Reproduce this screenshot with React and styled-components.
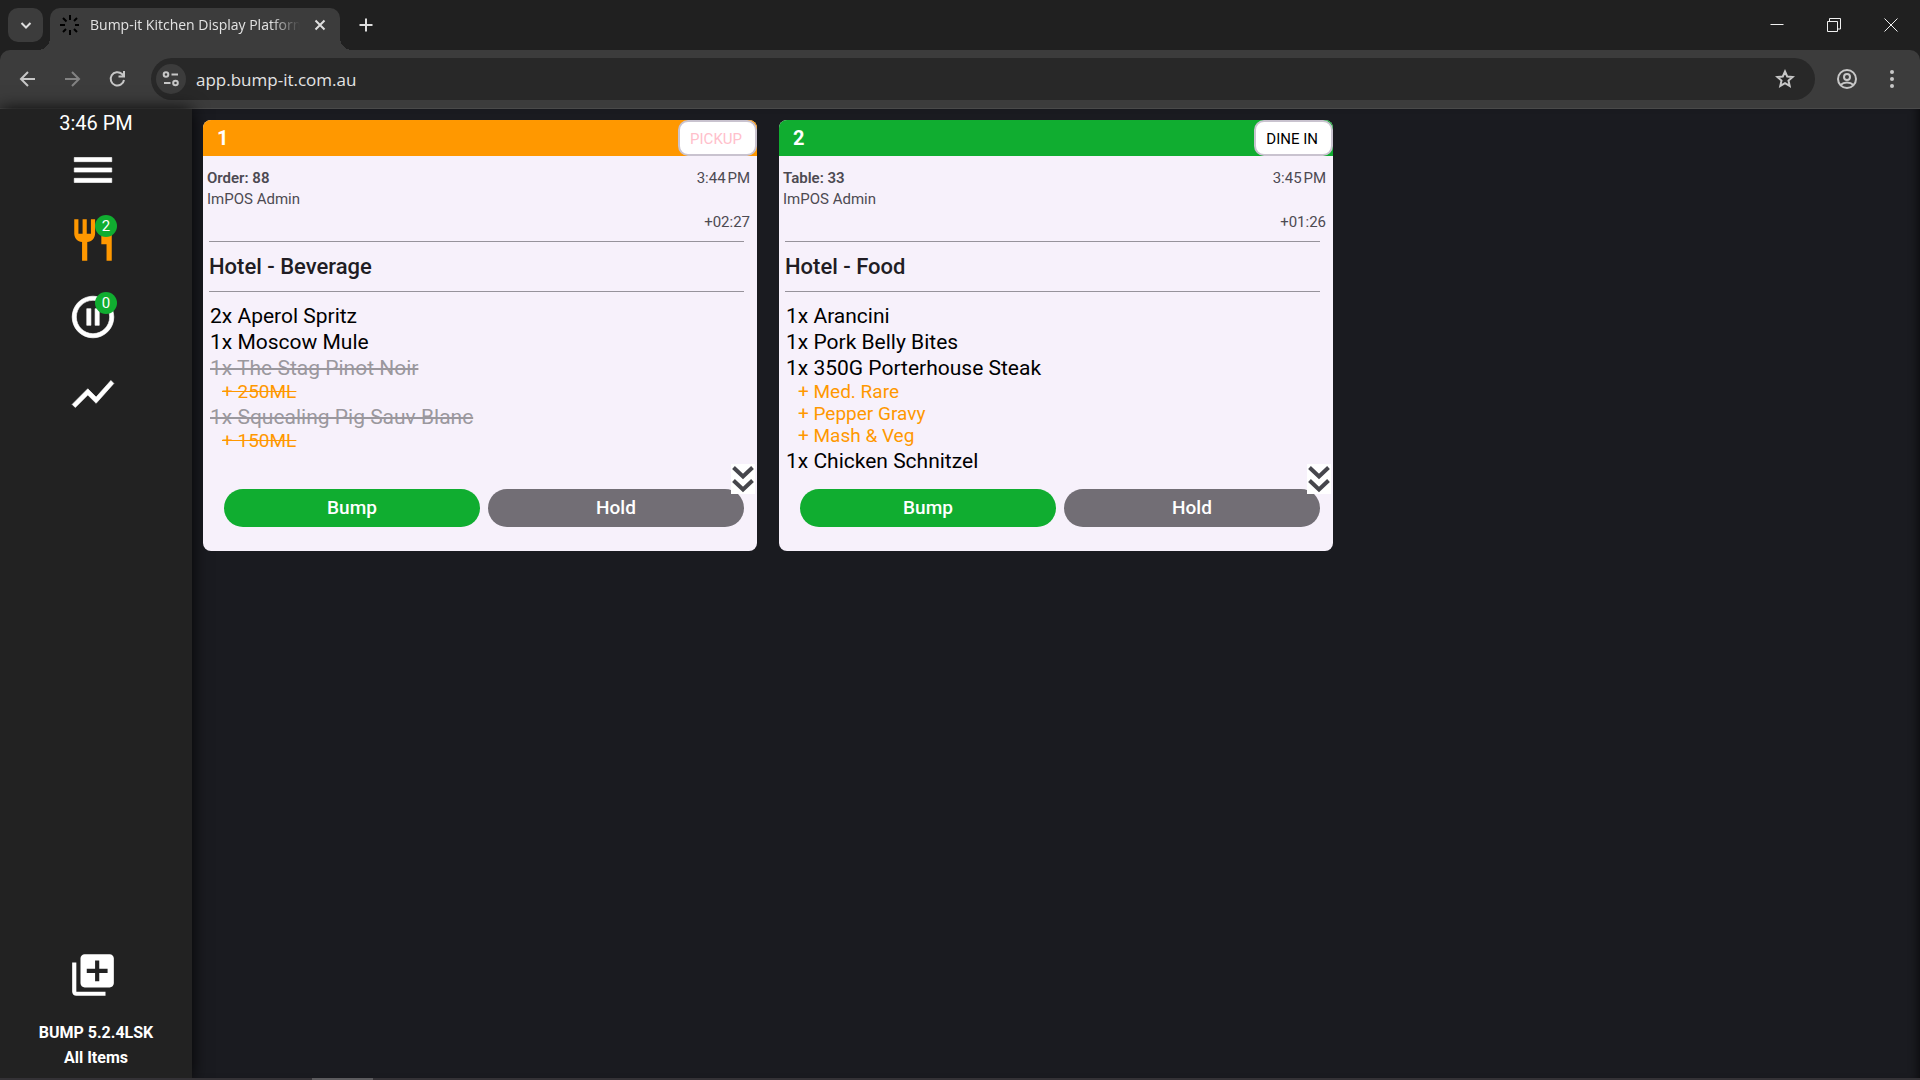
import { useState } from "react";
import styled, { createGlobalStyle } from "styled-components";
import {
  MdMenu,
  MdRestaurant,
  MdPauseCircleOutline,
  MdShowChart,
  MdLibraryAdd,
} from "react-icons/md";

const GlobalStyle = createGlobalStyle`
* {
  box-sizing: border-box;
}

body {
  margin: 0;
  background-color: #1a1b20;
  font-family: Roboto, "Liberation Sans", sans-serif;
}

button {
  display: flex;
  align-items: center;
  justify-content: center;
  padding: 0;
  border: none;
  background: none;
  color: inherit;
  font-family: inherit;
}

svg {
  display: block;
  flex-shrink: 0;
}

h2,
p,
ul,
li {
  margin: 0;
  padding: 0;
  list-style: none;
}
`;

const Window = styled.div`
  display: flex;
  flex-direction: column;
  height: 100vh;
`;

/* browser */

const TabStrip = styled.div`
  display: flex;
  align-items: flex-end;
  height: 50px;
  padding: 0 1px 0 8px;
  background-color: #202020;
  color: #dedede;
`;

const TabSearch = styled.button`
  align-self: center;
  width: 35px;
  height: 34px;
  margin-right: 7px;
  border-radius: 10px;
  background-color: #3c3c3c;
`;

const Tab = styled.div`
  position: relative;
  display: flex;
  align-items: center;
  gap: 10px;
  width: 290px;
  height: 42px;
  padding: 0 10px 8px;
  border-radius: 10px 10px 0 0;
  background-color: #3c3c3c;

  &::before,
  &::after {
    content: "";
    position: absolute;
    bottom: 0;
    width: 12px;
    height: 12px;
  }

  &::before {
    right: 100%;
    background: radial-gradient(circle at 0 0, transparent 12px, #3c3c3c 12px);
  }

  &::after {
    left: 100%;
    background: radial-gradient(circle at 100% 0, transparent 12px, #3c3c3c 12px);
  }
`;

const TabTitle = styled.span`
  flex: 1;
  overflow: hidden;
  white-space: nowrap;
  color: #e3e3e3;
  font-family: "Open Sans", "Noto Sans", sans-serif;
  font-size: 14px;
  line-height: 28px;
  mask-image: linear-gradient(to right, #000 86%, transparent);
`;

const TabClose = styled.button`
  width: 20px;
  height: 20px;
`;

const NewTab = styled.button`
  align-self: center;
  width: 30px;
  height: 30px;
  margin-left: 11px;
`;

const WindowControls = styled.div`
  display: flex;
  align-self: center;
  margin-left: auto;
  color: #f0f0f0;

  button {
    width: 57px;
    height: 40px;
  }
`;

const ToolbarArea = styled.div`
  background-color: #202020;
`;

const Toolbar = styled.div`
  display: flex;
  align-items: center;
  height: 59px;
  padding: 0 7px 0 8px;
  border-radius: 10px 10px 0 0;
  border-bottom: 1px solid #4a4a4a;
  background-color: #3c3c3c;
  color: #c7c7c7;
`;

const NavButton = styled.button`
  width: 40px;
  height: 40px;
  margin-right: 5px;
  opacity: ${({ $dim }) => ($dim ? 0.5 : 1)};
`;

const AddressBar = styled.div`
  display: flex;
  align-items: center;
  flex: 1;
  height: 42px;
  margin-left: 8px;
  padding: 0 20px 0 5px;
  border-radius: 21px;
  background-color: #282828;
`;

const SiteInfo = styled.button`
  width: 30px;
  height: 30px;
  margin-right: 10px;
  border-radius: 50%;
  background-color: #3c3c3c;
`;

const Address = styled.input`
  flex: 1;
  padding: 0;
  border: none;
  outline: none;
  background: none;
  color: #e3e3e3;
  font-family: "Open Sans", "Noto Sans", sans-serif;
  font-size: 17px;
`;

const MenuButtons = styled.div`
  display: flex;
  margin-left: 8px;

  button {
    width: 42px;
    height: 40px;
    margin-left: 3px;
  }
`;

/* app */

const Page = styled.div`
  display: flex;
  flex: 1;
  min-height: 0;
`;

const Sidebar = styled.nav`
  display: flex;
  flex-direction: column;
  align-items: center;
  width: 192px;
  padding-bottom: 8px;
  background-color: #222222;
  color: #ffffff;
  box-shadow: 0 0 16px rgba(0, 0, 0, 0.9);
`;

const Clock = styled.div`
  margin-bottom: 8px;
  font-size: 20px;
  line-height: 28px;
`;

const NavItem = styled.button`
  position: relative;
  width: 50px;
  height: 50px;
  margin: 0 6px 27px 0;
  color: ${({ $active }) => ($active ? "#ff9800" : "#ffffff")};
  font-size: 50px;

  &:first-of-type {
    margin-bottom: 20px;
  }

  path:not([fill="none"]) {
    stroke-width: ${({ $bold }) => ($bold ? 0.3 : 0)};
  }
`;

const Count = styled.span`
  position: absolute;
  top: 0;
  right: 1px;
  width: 22px;
  height: 22px;
  border-radius: 50%;
  background-color: #10ad30;
  color: #ffffff;
  font-size: 15px;
  line-height: 22px;
  text-align: center;
`;

const SidebarFooter = styled.div`
  display: flex;
  flex-direction: column;
  align-items: center;
  margin-top: auto;
  font-size: 16px;
  font-weight: 700;
  line-height: 25px;
`;

const Board = styled.main`
  flex: 1;
  display: grid;
  grid-template-columns: repeat(3, 1fr);
  align-content: start;
  gap: 22px;
  padding: 11px;
  box-shadow: inset -8px 0 10px -6px rgba(0, 0, 0, 0.6);
`;

const Card = styled.article`
  position: relative;
  display: flex;
  flex-direction: column;
  height: 431px;
  border-radius: 8px;
  background-color: #f7f1fb;
  overflow: hidden;
`;

const CardHeader = styled.header`
  display: flex;
  align-items: center;
  justify-content: space-between;
  height: 36px;
  padding-left: 14px;
  background-color: ${({ $color }) => $color};
  color: #ffffff;
  font-size: 20px;
  font-weight: 700;
`;

const OrderType = styled.span`
  height: 36px;
  padding: 0 13px 0 10px;
  border: 2px solid #c9c3cf;
  border-radius: 10px;
  background-color: #ffffff;
  color: ${({ $color }) => $color};
  font-size: 15px;
  font-weight: 400;
  line-height: 34px;
`;

const Info = styled.div`
  display: flex;
  justify-content: space-between;
  height: 85px;
  padding: 12px 7px 0 4px;
  color: #4d4a52;
  font-size: 15px;
  line-height: 21px;

  strong {
    font-weight: 600;
  }

  div:last-child {
    text-align: right;
  }

  time {
    display: block;
    margin-bottom: 23px;
  }
`;

const Section = styled.h2`
  margin: 0 13px 0 6px;
  border: solid #97939b;
  border-width: 1px 0;
  color: #211d24;
  font-size: 22px;
  font-weight: 500;
  line-height: 49px;
`;

const Items = styled.ul`
  flex: 1;
  padding: 11px 7px 0;
`;

const Item = styled.li`
  color: ${({ $done }) => ($done ? "#9b989e" : "#000000")};
  font-size: 21px;
  line-height: 26px;

  p {
    text-decoration: ${({ $done }) => ($done ? "line-through" : "none")};
  }
`;

const Modifiers = styled.ul`
  padding: 0 0 1px 12px;
`;

const Modifier = styled.li`
  color: #ff9800;
  font-size: 19px;
  line-height: 22px;
  text-decoration: ${({ $done }) => ($done ? "line-through" : "none")};
`;

const Actions = styled.div`
  display: flex;
  gap: 8px;
  padding: 0 13px 24px 21px;
`;

const ActionButton = styled.button`
  flex: 1;
  height: 38px;
  padding-bottom: 2px;
  border-radius: 19px;
  background-color: ${({ $color }) => $color};
  color: #ffffff;
  font-size: 19px;
  font-weight: 500;
`;

const ScrollDown = styled.button`
  position: absolute;
  right: 2px;
  bottom: 57px;
  width: 24px;
  height: 30px;
  background-color: #ffffff;
`;

const Taskbar = styled.footer`
  display: flex;
  height: 2px;
  padding-left: 312px;
  background-color: #343236;

  span {
    width: 61px;
    background-color: #5c5b5e;
  }
`;

const orders = [
  {
    number: 1,
    color: "#ff9800",
    type: "PICKUP",
    typeColor: "#ffc0cb",
    title: "Order: 88",
    staff: "ImPOS Admin",
    time: "3:44\u202fPM",
    elapsed: "+02:27",
    section: "Hotel - Beverage",
    items: [
      { text: "2x Aperol Spritz" },
      { text: "1x Moscow Mule" },
      { text: "1x The Stag Pinot Noir", done: true, mods: ["+ 250ML"] },
      { text: "1x Squealing Pig Sauv Blanc", done: true, mods: ["+ 150ML"] },
    ],
  },
  {
    number: 2,
    color: "#10ad30",
    type: "DINE IN",
    typeColor: "#000000",
    title: "Table: 33",
    staff: "ImPOS Admin",
    time: "3:45\u202fPM",
    elapsed: "+01:26",
    section: "Hotel - Food",
    items: [
      { text: "1x Arancini" },
      { text: "1x Pork Belly Bites" },
      {
        text: "1x 350G Porterhouse Steak",
        mods: ["+ Med. Rare", "+ Pepper Gravy", "+ Mash & Veg"],
      },
      { text: "1x Chicken Schnitzel" },
    ],
  },
];

const Icon = ({ size = 20, width = 2, children }) => (
  <svg
    width={size}
    height={size}
    viewBox={`0 0 ${size} ${size}`}
    fill="none"
    stroke="currentColor"
    strokeWidth={width}
    aria-hidden="true"
  >
    {children}
  </svg>
);

function Browser() {
  const [address, setAddress] = useState("app.bump-it.com.au");

  return (
    <>
      <TabStrip>
        <TabSearch aria-label="Search tabs">
          <Icon><path d="M5.5 8l4.5 4.5L14.5 8" /></Icon>
        </TabSearch>
        <Tab>
          <svg width="20" height="20" viewBox="0 0 20 20" stroke="#000" strokeWidth="2" aria-hidden="true">
            <path d="M10 0v5M10 15v5M0 10h5M15 10h4M3 3l3.5 3.5M14 14l3 3M17 3l-3 3M3 17l3-3" />
          </svg>
          <TabTitle>Bump-it Kitchen Display Platform</TabTitle>
          <TabClose aria-label="Close tab">
            <Icon><path d="M5.5 5.5l9 9M14.5 5.5l-9 9" /></Icon>
          </TabClose>
        </Tab>
        <NewTab aria-label="New tab">
          <Icon><path d="M10 3.5v13M3.5 10h13" /></Icon>
        </NewTab>
        <WindowControls>
          <button aria-label="Minimize">
            <Icon size={14} width={1}><path d="M0.5 6.5h13" /></Icon>
          </button>
          <button aria-label="Restore">
            <Icon size={14} width={1}>
              <path d="M0.5 3.5h10v10h-10zM2.5 3.5v-3h11v10.5h-3" />
            </Icon>
          </button>
          <button aria-label="Close">
            <Icon size={14} width={1}><path d="M0.5 0.5l13 13M13.5 0.5l-13 13" /></Icon>
          </button>
        </WindowControls>
      </TabStrip>
      <ToolbarArea>
        <Toolbar>
          <NavButton aria-label="Back">
            <Icon><path d="M17 10H3M10 3l-7 7 7 7" /></Icon>
          </NavButton>
          <NavButton aria-label="Forward" $dim>
            <Icon><path d="M2 10h14M9 3l7 7-7 7" /></Icon>
          </NavButton>
          <NavButton aria-label="Reload">
            <Icon><path d="M16 11a6.700 6.700 0 1 1-2-6l2 2M16 2v5.500h-5.500" /></Icon>
          </NavButton>
          <AddressBar>
            <SiteInfo aria-label="Site information">
              <Icon>
                <circle cx="5" cy="5.5" r="2.3" />
                <path d="M10.5 5.5H17M3 14h6.5" />
                <circle cx="14.5" cy="14" r="2.3" />
              </Icon>
            </SiteInfo>
            <Address
              aria-label="Address"
              value={address}
              onChange={(e) => setAddress(e.target.value)}
            />
            <button aria-label="Bookmark">
              <Icon>
                <path d="M10 2.500l2.200 5 5.400.5-4.100 3.600 1.200 5.300-4.700-2.800-4.700 2.800 1.200-5.300L2.400 8l5.400-.5z" />
              </Icon>
            </button>
          </AddressBar>
          <MenuButtons>
            <button aria-label="Profile">
              <Icon>
                <circle cx="10" cy="10" r="9" />
                <circle cx="10" cy="8" r="3" />
                <path d="M3.5 16c3.5-3.3 9.5-3.3 13 0" />
              </Icon>
            </button>
            <button aria-label="More">
              <svg width="20" height="20" viewBox="0 0 20 20" fill="currentColor" aria-hidden="true">
                <circle cx="10" cy="3" r="2" />
                <circle cx="10" cy="10" r="2" />
                <circle cx="10" cy="17" r="2" />
              </svg>
            </button>
          </MenuButtons>
        </Toolbar>
      </ToolbarArea>
    </>
  );
}

function Order({ order }) {
  return (
    <Card>
      <CardHeader $color={order.color}>
        {order.number}
        <OrderType $color={order.typeColor}>{order.type}</OrderType>
      </CardHeader>
      <Info>
        <div>
          <p><strong>{order.title}</strong></p>
          <p>{order.staff}</p>
        </div>
        <div>
          <time>{order.time}</time>
          <p>{order.elapsed}</p>
        </div>
      </Info>
      <Section>{order.section}</Section>
      <Items>
        {order.items.map((item) => (
          <Item key={item.text} $done={item.done}>
            <p>{item.text}</p>
            {item.mods &&
              <Modifiers>
                {item.mods.map((mod) => <Modifier key={mod} $done={item.done}>{mod}</Modifier>)}
              </Modifiers>}
          </Item>
        ))}
      </Items>
      <Actions>
        <ActionButton $color="#10ad30">Bump</ActionButton>
        <ActionButton $color="#726e75">Hold</ActionButton>
      </Actions>
      <ScrollDown aria-label="Scroll down">
        <svg width="24" height="30" viewBox="0 0 24 30" fill="none" stroke="#46464c" strokeWidth="4" aria-hidden="true">
          <path d="M2.5 3.5l9.5 9 9.5-9M2.5 16.5l9.5 9 9.5-9" />
        </svg>
      </ScrollDown>
    </Card>
  );
}

function App() {
  return (
    <>
      <GlobalStyle />
      <Window>
        <Browser />
        <Page>
          <Sidebar>
            <Clock>3:46 PM</Clock>
            <NavItem aria-label="Menu" $bold><MdMenu /></NavItem>
            <NavItem aria-label="Orders" $active>
              <MdRestaurant />
              <Count>2</Count>
            </NavItem>
            <NavItem aria-label="On hold" $bold>
              <MdPauseCircleOutline />
              <Count>0</Count>
            </NavItem>
            <NavItem aria-label="Reports" $bold><MdShowChart /></NavItem>
            <SidebarFooter>
              <NavItem aria-label="Add screen"><MdLibraryAdd /></NavItem>
              <p>BUMP 5.2.4LSK</p>
              <p>All Items</p>
            </SidebarFooter>
          </Sidebar>
          <Board>
            {orders.map((order) => <Order key={order.number} order={order} />)}
          </Board>
        </Page>
        <Taskbar><span /></Taskbar>
      </Window>
    </>
  );
}

export default App;
